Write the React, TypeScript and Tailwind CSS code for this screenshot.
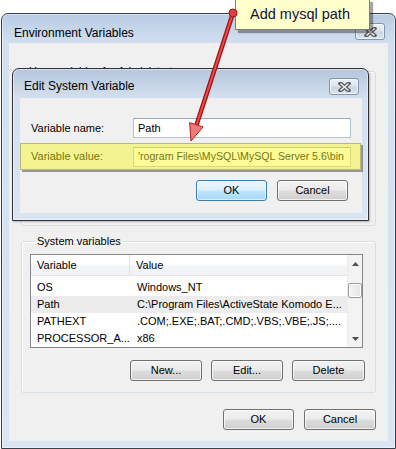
import React from 'react';

const btn =
  'flex items-center justify-center h-[21px] rounded-[3px] border border-[#707070] bg-[linear-gradient(to_bottom,#f2f2f2_0%,#ebebeb_48%,#dddddd_52%,#cfcfcf_100%)] shadow-[inset_0_0_0_1px_rgba(255,255,255,0.7)] text-[11px] text-black';

const input =
  'h-[20px] w-[218px] bg-white border border-[#b7c3d0] border-t-[#9da8b5] flex items-center overflow-hidden whitespace-nowrap text-black';

const CloseButton = () => (
  <div className="w-[30px] h-[17px] rounded-[3px] border border-[#8293aa] bg-[linear-gradient(to_bottom,#eef2f7_0%,#dbe3ee_48%,#cbd6e4_52%,#dae3ef_100%)] shadow-[inset_0_0_0_1px_rgba(255,255,255,0.6)] flex items-center justify-center">
    <svg width="13" height="10" viewBox="0 0 13 10">
      <path d="M2.5 1.5 L10.5 8.5 M10.5 1.5 L2.5 8.5" stroke="#5c5c5c" strokeWidth="4" strokeLinecap="square" />
      <path d="M2.5 1.5 L10.5 8.5 M10.5 1.5 L2.5 8.5" stroke="#eeeeee" strokeWidth="1.6" />
    </svg>
  </div>
);

const rows = [
  ['OS', 'Windows_NT'],
  ['Path', 'C:\\Program Files\\ActiveState Komodo E...'],
  ['PATHEXT', '.COM;.EXE;.BAT;.CMD;.VBS;.VBE;.JS;....'],
  ['PROCESSOR_A...', 'x86'],
];

export default function App() {
  return (
    <div className="relative w-[396px] h-[449px] overflow-hidden bg-white font-['Liberation_Sans',Arial,sans-serif] text-black">
      {/* Environment Variables window */}
      <div className="ml-[1px] mt-[13px] w-[395px] h-[436px] flex flex-col rounded-t-[7px] border border-[#3b4048] px-[7px] pb-[7px] bg-[linear-gradient(to_bottom,#b9cce4_0px,#d2dfef_30px,#d9e5f3_100%)] shadow-[inset_0_0_0_1px_rgba(255,255,255,0.45)]">
        <div className="h-[29px] flex justify-between items-start">
          <div className="pt-[11px] pl-[5px] text-[12px] leading-[16px]">Environment Variables</div>
          <div className="mt-[9px] mr-[3px]">
            <CloseButton />
          </div>
        </div>

        <div className="relative flex-1 bg-[#f0f0f0] flex flex-col">
          {/* User variables group (covered by the dialog) */}
          <fieldset className="mt-[21px] ml-[12px] w-[355px] h-[162px] border border-[#d5dfe5] rounded-[3px] shadow-[inset_1px_1px_0_#fff]">
            <legend className="ml-[5px] px-[2px] text-[11px] leading-[14px]">User variables for Administrator</legend>
          </fieldset>

          {/* System variables group */}
          <fieldset className="mt-[8px] ml-[12px] w-[355px] h-[159px] border border-[#d5dfe5] rounded-[3px] shadow-[inset_1px_1px_0_#fff] pl-[8px] pr-[10px] pt-[6px] pb-[12px] flex flex-col">
            <legend className="ml-[5px] px-[2px] text-[11px] leading-[14px]">System variables</legend>
            <div className="w-[333px] h-[94px] border border-[#828790] bg-white flex overflow-hidden">
              <div className="flex-1 flex flex-col">
                <div className="h-[22px] flex text-[11px] bg-[linear-gradient(to_bottom,#ffffff_0%,#ffffff_45%,#f3f4f6_55%,#f1f2f4_100%)] border-b border-[#e3e6ea]">
                  <div className="w-[99px] pl-[6px] flex items-center border-r border-[#e2e4e8]">Variable</div>
                  <div className="flex-1 pl-[6px] flex items-center">Value</div>
                </div>
                <div className="pt-[3px] flex flex-col">
                  {rows.map(([name, value], i) => (
                    <div
                      key={name}
                      className={`h-[17px] flex items-center text-[11px] whitespace-nowrap ${i === 1 ? 'bg-[#ececec]' : ''}`}
                    >
                      <div className="w-[99px] pl-[6px]">{name}</div>
                      <div className="flex-1 pl-[7px]">{value}</div>
                    </div>
                  ))}
                </div>
              </div>
              {/* scrollbar */}
              <div className="w-[15px] flex flex-col bg-[#f3f3f3] border-l border-[#ececec]">
                <div className="h-[17px] flex items-center justify-center">
                  <svg width="7" height="4" viewBox="0 0 7 4">
                    <path d="M0 4 L3.5 0 L7 4 Z" fill="#505050" />
                  </svg>
                </div>
                <div className="mt-[11px] h-[15px] rounded-[2px] border border-[#9b9b9b] bg-[linear-gradient(to_right,#f6f6f6,#e4e4e4)] shadow-[inset_0_0_0_1px_#fff]" />
                <div className="flex-1" />
                <div className="h-[17px] flex items-center justify-center">
                  <svg width="7" height="4" viewBox="0 0 7 4">
                    <path d="M0 0 L3.5 4 L7 0 Z" fill="#505050" />
                  </svg>
                </div>
              </div>
            </div>
            <div className="mt-[12px] flex justify-end gap-[9px]">
              <div className={`${btn} w-[72px]`}>New...</div>
              <div className={`${btn} w-[72px]`}>Edit...</div>
              <div className={`${btn} w-[73px]`}>Delete</div>
            </div>
          </fieldset>

          <div className="mt-[16px] flex justify-end gap-[10px] pr-[12px]">
            <div className={`${btn} w-[71px]`}>OK</div>
            <div className={`${btn} w-[72px]`}>Cancel</div>
          </div>

          {/* Edit System Variable dialog */}
          <div className="absolute left-[3px] top-[25px] w-[357px] h-[153px] flex flex-col rounded-t-[7px] border border-[#2f343c] pl-[7px] pr-[6px] pb-[7px] bg-[linear-gradient(to_bottom,#b5c7dd_0px,#d3e0ef_30px,#d9e5f3_100%)] shadow-[inset_0_0_0_1px_rgba(255,255,255,0.45),1px_1px_2px_rgba(0,0,0,0.25)]">
            <div className="h-[29px] flex justify-between items-start">
              <div className="pt-[9px] pl-[4px] text-[12px] leading-[16px]">Edit System Variable</div>
              <div className="mt-[9px] mr-[3px]">
                <CloseButton />
              </div>
            </div>
            <div className="flex-1 bg-[#f0f0f0] flex flex-col pt-[20px]">
              <div className="h-[20px] flex items-center pl-[11px]">
                <div className="w-[102px] text-[11px]">Variable name:</div>
                <div className={`${input} pl-[4px] text-[11px]`}>Path</div>
              </div>
              <div className="relative mt-[5px] h-[27px] flex items-center pl-[11px]">
                <div className="w-[102px] text-[11px]">Variable value:</div>
                <div className={`${input} pl-[4px] text-[10.6px]`}>'rogram Files\MySQL\MySQL Server 5.6\bin</div>
                {/* highlight marker */}
                <div className="absolute inset-0 right-[1px] bg-[rgba(246,246,28,0.46)] border border-[#b9b978] shadow-[2px_2px_0_rgba(80,80,80,0.55)]" />
              </div>
              <div className="mt-[10px] flex justify-end gap-[10px] pr-[14px]">
                <div className="flex items-center justify-center h-[21px] w-[71px] rounded-[3px] border border-[#3c7fb1] bg-[linear-gradient(to_bottom,#eaf6fd_0%,#d9f0fc_48%,#bee6fd_52%,#a7d9f5_100%)] shadow-[inset_0_0_0_1px_rgba(255,255,255,0.6)] text-[11px]">
                  OK
                </div>
                <div className={`${btn} w-[71px]`}>Cancel</div>
              </div>
            </div>
          </div>
        </div>
      </div>

      {/* callout */}
      <div className="absolute left-[235px] top-[-1px] w-[135px] h-[31px] bg-[#ffffcc] border border-[#808080] shadow-[3px_3px_1px_rgba(0,0,0,0.35)] flex items-center pl-[14px] text-[14.5px] text-[#10103a]">
        Add mysql path
      </div>

      {/* arrow */}
      <svg className="absolute left-0 top-0 pointer-events-none" width="396" height="449" viewBox="0 0 396 449">
        <line x1="233" y1="13" x2="196.5" y2="125" stroke="#9c1414" strokeWidth="4.5" />
        <line x1="233" y1="13" x2="196.5" y2="125" stroke="#ee4848" strokeWidth="2" />
        <polygon points="191,141 203,127 189.6,122.6" fill="#f07a7a" stroke="#b42020" strokeWidth="1" />
        <circle cx="233" cy="13" r="4" fill="#e23c3c" stroke="#a01818" strokeWidth="1" />
      </svg>
    </div>
  );
}
